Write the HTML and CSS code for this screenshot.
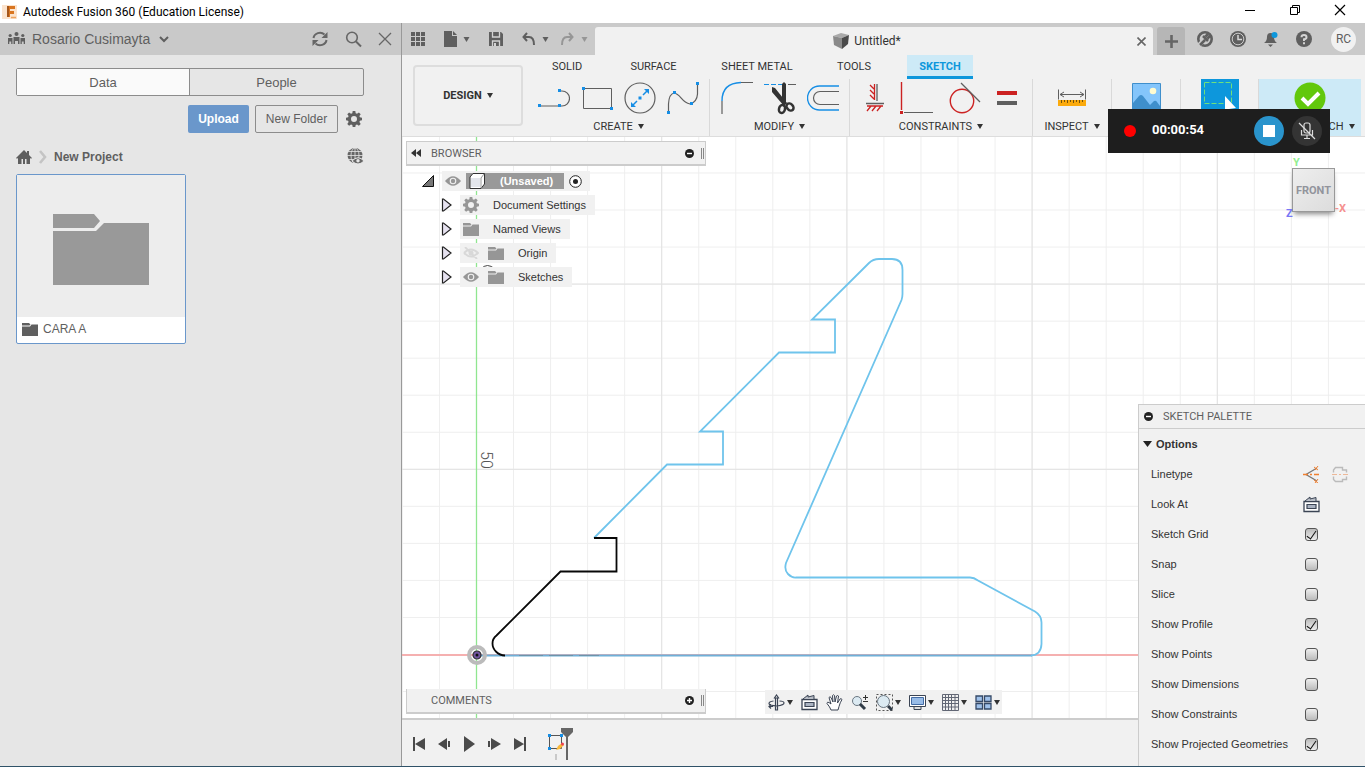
FILE: index.html
```html
<!DOCTYPE html>
<html lang="en">
<head>
<meta charset="utf-8">
<title>Autodesk Fusion 360 (Education License)</title>
<link rel="stylesheet" href="styles.css">
</head>
<body>
<svg class="defs" aria-hidden="true">
  <defs>
    <symbol id="caret" viewBox="0 0 6 5"><path d="M0 0h6L3 5z" fill="currentColor"/></symbol>
    <symbol id="folder" viewBox="0 0 16 13"><path d="M0 0h7l1.500 1.500L7.500 2.500H0zM0 3.500h8l1.500-2H16V13H0z" fill="currentColor"/></symbol>
    <symbol id="gear" viewBox="0 0 16 16"><path fill="currentColor" fill-rule="evenodd" d="M6.700 0h2.600l.4 2.200 1.300.5L12.900 1.400l1.800 1.800-1.300 1.900.5 1.200 2.100.4v2.600l-2.100.4-.5 1.300 1.300 1.900-1.800 1.800-1.900-1.300-1.300.5L9.300 16H6.700l-.4-2.100-1.300-.5-1.900 1.300-1.800-1.800L2.600 11l-.5-1.300L0 9.300V6.700l2.100-.4.5-1.200L1.300 3.200l1.800-1.800L5 2.700l1.300-.5zM8 5a3 3 0 100 6 3 3 0 000-6z"/></symbol>
    <symbol id="eye" viewBox="0 0 16 10"><path d="M0 5Q8-4.500 16 5 8 14.500 0 5z" fill="currentColor"/><circle cx="8" cy="5" r="3.300" fill="#f1f1f1"/><circle cx="8" cy="5" r="2.200" fill="currentColor"/></symbol>
    <symbol id="arrow" viewBox="0 0 11 14"><path d="M1.500 1h1L10 7l-7.500 6h-1z" fill="#e6e2f0" stroke="#222" stroke-width="1.200"/></symbol>
    <symbol id="lookat" viewBox="0 0 17 17"><path d="M1 5.500h15v10H1z" fill="#fff" stroke="#3b4454" stroke-width="1.300"/><path d="M4 8.500h9v4H4z" fill="#aab3c2" stroke="#3b4454" stroke-width="1.200"/><path d="M2 5l5-4v2l6-1.500V5" fill="#b8bdc6" stroke="#3b4454"/></symbol>
  </defs>
</svg>
<div class="app">
  <header class="titlebar">
    <svg class="logo" width="16" height="16" viewBox="0 0 16 16"><path fill="#fbe3cd" d="M0 1h15v14H0z"/><path fill="#d9751f" d="M5 2h8v3H8v2h4v3H8v3H5z"/><path fill="#a5561a" d="M5 2h2v11H5z"/><path d="M9 13.500h5" stroke="#eda25d" stroke-width="1.500"/></svg>
    <span class="title">Autodesk Fusion 360 (Education License)</span>
    <button class="win" aria-label="Minimize"><svg width="12" height="12" viewBox="0 0 12 12"><path d="M1 6.500h10" stroke="#000"/></svg></button>
    <button class="win" aria-label="Restore"><svg width="12" height="12" viewBox="0 0 12 12" fill="none" stroke="#000"><path d="M1.500 3.500h7v7h-7zM3.500 3V1.500h7v7H9"/></svg></button>
    <button class="win" aria-label="Close"><svg width="12" height="12" viewBox="0 0 12 12" stroke="#000" stroke-width="1.200"><path d="M1 1l10 10M11 1L1 11"/></svg></button>
  </header>
  <div class="body">
    <aside class="data">
      <div class="data-head">
        <svg width="17" height="14" viewBox="0 0 17 14" fill="#5f5f5f"><circle cx="8.500" cy="2" r="2"/><circle cx="2.200" cy="3.500" r="1.600"/><circle cx="14.800" cy="3.500" r="1.600"/><path d="M5.500 5h6v7h-1.500V9h-3v3H5.500zM0 6h4.500v6H3.200V9.500H1.300V12H0zM12.500 6H17v6h-1.300V9.500h-1.900V12h-1.300z"/></svg>
        <button class="team">Rosario Cusimayta <svg width="10" height="7" viewBox="0 0 10 7"><path d="M1 1l4 4 4-4" fill="none" stroke="#5f5f5f" stroke-width="2"/></svg></button>
        <button aria-label="Refresh"><svg width="18" height="16" viewBox="0 0 18 16" fill="none" stroke="#666" stroke-width="2"><path d="M2.500 7A6.500 6 0 0113.500 3.500M15.500 9A6.500 6 0 014.500 12.500"/><path d="M16.500 1v6h-6zM1.500 15V9h6z" fill="#666" stroke="none"/></svg></button>
        <button aria-label="Search"><svg width="17" height="17" viewBox="0 0 17 17" fill="none" stroke="#666" stroke-width="1.600"><circle cx="7" cy="6.500" r="5.300"/><path d="M11 10.500l5 5" stroke-width="2"/></svg></button>
        <button aria-label="Close panel"><svg width="14" height="14" viewBox="0 0 14 14" stroke="#666" stroke-width="1.300"><path d="M1 1l12 12M13 1L1 13"/></svg></button>
      </div>
      <div class="data-body">
        <div class="seg"><button class="on">Data</button><button>People</button></div>
        <div class="actions">
          <button class="upload">Upload</button><button class="newfolder">New Folder</button>
          <button class="plain" aria-label="Settings"><svg width="16" height="16"><use href="#gear"/></svg></button>
        </div>
        <nav class="crumbs">
          <svg width="16" height="14" viewBox="0 0 16 14" fill="#5f5f5f"><path d="M8 0l3 3V1h2v4l3 3-1 .8L14 8v6h-3.500V9h-1.500v5H7V9H5.500v5H2V8l-1 .8L0 8z"/></svg>
          <svg width="10" height="14" viewBox="0 0 10 14"><path d="M2 1l5 6-5 6" fill="none" stroke="#c4c4c4" stroke-width="2.600"/></svg>
          <a href="#project">New Project</a>
          <button class="plain" aria-label="Open on the web"><svg width="17" height="17" viewBox="0 0 17 17"><circle cx="8" cy="7.500" r="7.500" fill="#666"/><path d="M8 0v15M0 7.500h16M1.500 3.500h13M1.500 11.500h10" stroke="#e6e6e6" stroke-width=".8"/><ellipse cx="8" cy="7.500" rx="4" ry="7.500" fill="none" stroke="#e6e6e6" stroke-width=".8"/><path d="M5 13q6-6.500 12 0-6 6-12 0" fill="#666" stroke="#e6e6e6"/><circle cx="11" cy="12.800" r="1.700" fill="#e6e6e6"/></svg></button>
        </nav>
        <a class="card" href="#cara">
          <span class="thumb"><svg width="96" height="71" viewBox="0 0 96 71" fill="#999"><path d="M0 0h41l6 7-6 7H0zM0 17h43l8-8h45v62H0z"/></svg></span>
          <span class="cap"><svg width="16" height="13"><use href="#folder"/></svg>CARA A</span>
        </a>
      </div>
    </aside>
    <main class="work">
      <div class="docbar">
        <div class="quick">
          <button aria-label="Show data panel"><svg width="14" height="14" viewBox="0 0 14 14" fill="#5f5f5f"><path d="M0 0h4v4H0zM5 0h4v4H5zM10 0h4v4h-4zM0 5h4v4H0zM5 5h4v4H5zM10 5h4v4h-4zM0 10h4v4H0zM5 10h4v4H5zM10 10h4v4h-4z"/></svg></button>
          <button class="file" aria-label="File"><svg width="13" height="16" viewBox="0 0 13 16" fill="#5f5f5f"><path d="M0 0h8v5h5v11H0zM9 0l4 4H9z"/></svg><svg width="7" height="5"><use href="#caret"/></svg></button>
          <button class="save" aria-label="Save"><svg width="14" height="14" viewBox="0 0 14 14"><path fill="#5f5f5f" d="M0 0h12l2 2v12H0z"/><path d="M3.500 0v5h7V0M3.500 14V9h7v5" fill="none" stroke="#d4d4d4" stroke-width="1.300"/><path d="M5 11h2v3H5z" fill="#d4d4d4"/></svg></button>
          <button class="undo" aria-label="Undo"><svg width="13" height="14" viewBox="0 0 13 14" fill="none" stroke="#5f5f5f" stroke-width="2"><path d="M5 1L1.500 5 5 9M2 5h5q5 0 5 8"/></svg><svg width="7" height="5"><use href="#caret"/></svg></button>
          <button class="redo" aria-label="Redo"><svg width="13" height="14" viewBox="0 0 13 14" fill="none" stroke="#969696" stroke-width="2"><path d="M8 1l3.500 4L8 9M11 5H6q-5 0-5 8"/></svg><svg width="7" height="5"><use href="#caret"/></svg></button>
        </div>
        <div class="doctab">
          <span class="docname"><svg width="16" height="16" viewBox="0 0 16 16"><path d="M0 3l8-3 8 2-7 3z" fill="#aaa"/><path d="M0 3l9 2v11L1 12z" fill="#8a8a8a"/><path d="M16 2L9 5v11l6-5z" fill="#4a4a4a"/></svg>Untitled*</span>
          <button class="plain" aria-label="Close tab"><svg width="9" height="9" viewBox="0 0 9 9" stroke="#666" stroke-width="1.600"><path d="M.5.5l8 8M8.500.5l-8 8"/></svg></button>
        </div>
        <button class="addtab" aria-label="New tab"><svg width="13" height="13" viewBox="0 0 13 13" stroke="#666" stroke-width="2.600"><path d="M6.500 0v13M0 6.500h13"/></svg></button>
        <div class="account">
          <button aria-label="Extensions"><svg width="16" height="16" viewBox="0 0 16 16"><circle cx="8" cy="8" r="6.700" fill="none" stroke="#5f5f5f" stroke-width="2.600"/><path d="M2 14l5-5" stroke="#cacaca" stroke-width="4"/><path d="M3 14l5-5M6 5l5 5M8.500 5.500L11 3M10.500 7.500L13 5" stroke="#5f5f5f" stroke-width="2.500"/></svg></button>
          <button aria-label="Job status"><svg width="16" height="16" viewBox="0 0 16 16"><circle cx="8" cy="8" r="8" fill="#5f5f5f"/><circle cx="8" cy="8" r="5.800" fill="none" stroke="#cacaca"/><path d="M8 4v4.500h4" fill="none" stroke="#d8d8d8" stroke-width="1.500"/></svg></button>
          <button aria-label="Notifications"><svg width="16" height="16" viewBox="0 0 16 16"><path d="M1 12q3-2 3-6 0-4 3.500-4T11 6q0 4 3 6zM5 13.500h5L7.500 16z" fill="#5f5f5f"/><circle cx="11.500" cy="4" r="3" fill="#0d97dc"/></svg></button>
          <button aria-label="Help"><svg width="16" height="16" viewBox="0 0 16 16"><circle cx="8" cy="8" r="8" fill="#5f5f5f"/><path d="M5.500 6.200Q5.500 4 8 4t2.500 2.200Q10.500 8 8 8.300V10" fill="none" stroke="#d4d4d4" stroke-width="2"/><path d="M7 11.300h2v2H7z" fill="#d4d4d4"/></svg></button>
          <button class="avatar">RC</button>
        </div>
      </div>
      <div class="ribbon">
        <button class="design">DESIGN <svg width="6" height="5"><use href="#caret"/></svg></button>
        <div class="ribbon-main">
          <div class="tabs">
            <button class="t-solid">SOLID</button><button class="t-surface">SURFACE</button><button class="t-sheet">SHEET METAL</button><button class="t-tools">TOOLS</button><button class="t-sketch">SKETCH</button>
          </div>
          <div class="groups">
            <section class="group g-create">
              <div class="tools">
                <svg width="32" height="32" viewBox="0 0 32 32" fill="none" stroke="#5f5f5f" stroke-width="1.200"><path d="M2 24h20M22 9h2a7.500 7.500 0 010 15h-3"/><g fill="#168ee5" stroke="none"><path d="M0 22h3v3H0zM20 22h3v3h-3zM20 7h3v3h-3z"/></g></svg>
                <svg width="32" height="32" viewBox="0 0 32 32"><path d="M2.500 6.500h28v20h-28z" fill="none" stroke="#5f5f5f"/><path d="M1 5h3v3H1zM29 25h3v3h-3z" fill="#168ee5"/></svg>
                <svg width="32" height="32" viewBox="0 0 32 32"><circle cx="16" cy="16" r="15" fill="none" stroke="#5f5f5f" stroke-width="1.200"/><path d="M8 24l5-5M19 13l5-5" stroke="#168ee5" stroke-width="1.500"/><path d="M7 25v-5l5 5zM25 7v5l-5-5zM14.500 14.500h3v3h-3z" fill="#168ee5"/></svg>
                <svg width="32" height="32" viewBox="0 0 32 32"><path d="M1.500 29V22Q2 12 7 11C14 12 14 20 23 22q7-2 7.500-10V2" fill="none" stroke="#5f5f5f" stroke-width="1.200"/><path d="M0 29h3v3H0zM6 9h3v3H6zM23 20h3v3h-3zM29 0h3v3h-3z" fill="#168ee5"/></svg>
              </div>
              <button>CREATE <svg width="6" height="5"><use href="#caret"/></svg></button>
            </section>
            <section class="group g-modify">
              <div class="tools">
                <svg width="32" height="34" viewBox="0 0 32 34" fill="none"><path d="M1 20v13M20 1.500h12" stroke="#5f5f5f" stroke-width="1.200"/><path d="M1 20Q1 2 20 1.500" stroke="#168ee5" stroke-width="1.400"/></svg>
                <svg width="32" height="34" viewBox="0 0 32 34" fill="none"><path d="M0 3.500h18" stroke="#168ee5" stroke-dasharray="5 2"/><path d="M24 3.500h8" stroke="#5f5f5f"/><path d="M8 6l3 1 12 15-3 3L8 11zM18 3l2-2 2 2v20l-4 2z" fill="#333"/><ellipse cx="18" cy="28" rx="3" ry="4" stroke="#333" stroke-width="2.500" transform="rotate(15 18 28)"/><ellipse cx="26" cy="26" rx="3" ry="4" stroke="#333" stroke-width="2.500" transform="rotate(-45 26 26)"/></svg>
                <svg width="32" height="32" viewBox="0 0 32 32" fill="none"><path d="M32 4H12.500a12 12 0 000 24H32" stroke="#168ee5" stroke-width="1.400"/><path d="M32 9.500H13a6.500 6.500 0 000 13h19" stroke="#5f5f5f" stroke-width="1.200"/></svg>
              </div>
              <button>MODIFY <svg width="6" height="5"><use href="#caret"/></svg></button>
            </section>
            <section class="group g-constraints">
              <div class="tools">
                <svg width="18" height="30" viewBox="0 0 18 30" fill="none" stroke="#c22" stroke-width="1.300"><path d="M8.500 1v16M4 2l4 4M4 7l4 4M4 12l4 4M1 23h16M5 23l-4 5M10 23l-4 5M15 23l-4 5"/><path d="M11 1v17M0 20.500h18" stroke="#5f5f5f"/></svg>
                <svg width="33" height="34" viewBox="0 0 33 34"><path d="M1.500 1v28" stroke="#c22" stroke-width="1.400"/><path d="M4 31.500h29" stroke="#5f5f5f"/><path d="M0 30h3v3H0z" fill="#c22"/></svg>
                <svg width="32" height="34" viewBox="0 0 32 34" fill="none"><circle cx="13" cy="20" r="11.700" stroke="#c22" stroke-width="1.400"/><path d="M12 2l19 19" stroke="#5f5f5f" stroke-width="1.300"/></svg>
                <svg width="20" height="32" viewBox="0 0 20 32"><path d="M0 9h20v4H0z" fill="#c22"/><path d="M0 19h20v4H0z" fill="#5f5f5f"/></svg>
              </div>
              <button>CONSTRAINTS <svg width="6" height="5"><use href="#caret"/></svg></button>
            </section>
            <section class="group g-inspect">
              <div class="tools"><svg width="28" height="32" viewBox="0 0 28 32"><path d="M.5 7.500v10M27.500 7.500v10M2 12.500h24M6 10l-4 2.500L6 15M22 10l4 2.500-4 2.500" fill="none" stroke="#5f5f5f"/><path d="M0 18h28v6H0z" fill="#fbaa0c"/><path d="M3.500 18v3M6.500 18v2M9.500 18v3M12.500 18v2M15.500 18v3M18.500 18v2M21.500 18v3M24.500 18v2" stroke="#70500b"/></svg></div>
              <button>INSPECT <svg width="6" height="5"><use href="#caret"/></svg></button>
            </section>
            <section class="group g-insert">
              <button class="tools" aria-label="Insert"><svg width="29" height="30" viewBox="0 0 29 30"><path d="M.5.500h28v29H.5z" fill="#84c5fb" stroke="#3f8fcc"/><circle cx="21" cy="8" r="3.300" fill="#fffbd0"/><path d="M1 20l6-7q2-2 4 0l7 9 4-4q2-1 3 1l3 4v7H1z" fill="#3f8fcc"/></svg></button>
            </section>
            <section class="group g-select">
              <button class="tools" aria-label="Select"><svg width="38" height="38" viewBox="0 0 38 38"><path d="M0 0h38v38H0z" fill="#0d97dc"/><path d="M3.500 3.500h27v21h-27z" fill="none" stroke="#6ee07d" stroke-dasharray="5 2"/><path d="M24 17v17l4-4 7-1z" fill="#fff"/></svg></button>
            </section>
            <section class="group g-finish">
              <div class="tools"><svg width="32" height="32" viewBox="0 0 32 32"><circle cx="16" cy="16" r="15.500" fill="#62c80c"/><path d="M8 16l6 6L25 11" fill="none" stroke="#fff" stroke-width="4"/></svg></div>
              <button>FINISH SKETCH <svg width="6" height="5"><use href="#caret"/></svg></button>
            </section>
          </div>
        </div>
      </div>
      <div class="canvas">
        <svg class="drawing" role="img" aria-label="Sketch profile">
          <defs>
            <pattern id="minor" width="37.040" height="37.040" patternUnits="userSpaceOnUse" patternTransform="translate(-1 -1)"><path d="M0 0v37.040M0 0h37.040" fill="none" stroke="#eee" stroke-width="2"/></pattern>
            <pattern id="major" width="185.200" height="185.200" patternUnits="userSpaceOnUse" patternTransform="translate(-1 -1)"><path d="M0 0v185.200M0 0h185.200" fill="none" stroke="#e2e2e2" stroke-width="2"/></pattern>
          </defs>
          <g transform="translate(75 518)">
            <path d="M-80-600H4000V3000H-80z" fill="url(#minor)"/><path d="M-80-600H4000V3000H-80z" fill="url(#major)"/>
            <path d="M-80 0H4000" stroke="#f5b0b0" stroke-width="2"/><path d="M-.5-600V2000" stroke="#90e690" stroke-width="1.300"/>
            <path d="M4-386q6-7 14 0" fill="none" stroke="#444"/>
            <path d="M0 .5h555" stroke="#6fb0d8" stroke-width="2"/><path d="M42 .5h80" stroke="#6c94aa" stroke-width="1" stroke-dasharray="24 6"/>
            <path d="M117-117l73-73.500h56v-33h-23l79-79h56v-33h-23l57-56.500q4-4 10-4h13q10.500 0 10.500 11v24q0 3-1 6L309-92q-2 7 2 11t8 3.500h174q4 0 8 3l57 31q6.500 4 6.500 11V-11Q564 0 554 .5" fill="none" stroke="#6fc4ec" stroke-width="1.800"/>
            <path d="M28 .5c-7 0-12.500-6-12.500-12q0-5 4-8L83.500-83.500h56V-117H117" fill="none" stroke="#080808" stroke-width="1.800"/>
            <circle r="8" fill="none" stroke="#bbb" stroke-width="4"/><circle r="4" fill="#7255a0" stroke="#333" stroke-width="1.200"/><circle r="1.500" fill="#111"/>
            <text class="dimension" transform="translate(4 -204) rotate(90)">50</text>
          </g>
        </svg>
        <div class="browser">
          <div class="panelbar"><svg width="10" height="8" viewBox="0 0 10 8"><path d="M5 0v8L0 4zM10 0v8L5 4z" fill="#333"/></svg><span>BROWSER</span><button class="plain" aria-label="Collapse browser"><svg width="9" height="9" viewBox="0 0 9 9"><circle cx="4.500" cy="4.500" r="4.500" fill="#222"/><path d="M2 4.500h5" stroke="#fff" stroke-width="1.400"/></svg></button><i class="grip"></i></div>
          <ul class="tree">
            <li class="root"><svg width="12" height="12" viewBox="0 0 12 12"><path d="M11.500.5v11H.5z" fill="#777" stroke="#111"/></svg><span class="node"><svg class="gray" width="16" height="10"><use href="#eye"/></svg><span class="unsaved"><svg width="16" height="16" viewBox="0 0 16 16"><path d="M1 4l3-3.500h11.500V11L12 15.500H1z" fill="#fff" stroke="#333"/><path d="M12 15V5l3-4" fill="none" stroke="#999"/><path d="M2 5h9v9H2z" fill="#e4e6ec"/></svg><b>(Unsaved)</b></span><svg width="13" height="13" viewBox="0 0 13 13"><circle cx="6.500" cy="6.500" r="5.800" fill="#fff" stroke="#222"/><circle cx="6.500" cy="6.500" r="2.500" fill="#222"/></svg></span></li>
            <li><svg width="11" height="14"><use href="#arrow"/></svg><span class="node"><svg class="gray" width="16" height="16"><use href="#gear"/></svg><span class="label">Document Settings</span></span></li>
            <li><svg width="11" height="14"><use href="#arrow"/></svg><span class="node"><svg class="gray" width="16" height="13"><use href="#folder"/></svg><span class="label">Named Views</span></span></li>
            <li><svg width="11" height="14"><use href="#arrow"/></svg><span class="node"><svg class="faint" width="16" height="12" viewBox="0 0 16 12"><path d="M1 6q7-7 14 0-7 7-14 0M2 0l12 12" fill="none" stroke="currentColor" stroke-width="1.800"/><circle cx="8" cy="6" r="2.500" fill="currentColor"/></svg><svg class="gray second" width="16" height="13"><use href="#folder"/></svg><span class="label">Origin</span></span></li>
            <li><svg width="11" height="14"><use href="#arrow"/></svg><span class="node"><svg class="gray" width="16" height="10"><use href="#eye"/></svg><svg class="gray second" width="16" height="13"><use href="#folder"/></svg><span class="label">Sketches</span></span></li>
          </ul>
        </div>
        <div class="comments panelbar"><span>COMMENTS</span><button class="plain" aria-label="Expand comments"><svg width="9" height="9" viewBox="0 0 9 9"><circle cx="4.500" cy="4.500" r="4.500" fill="#222"/><path d="M2 4.500h5M4.500 2v5" stroke="#fff" stroke-width="1.400"/></svg></button><i class="grip"></i></div>
        <div class="navbar">
          <button aria-label="Orbit"><svg width="17" height="17" viewBox="0 0 17 17" fill="none" stroke="#3b4454" stroke-width="1.200"><path d="M7.500 16V4h2v12zM6 4.500L8.500 1 11 4.500M11.500 7q4.500 0 4.500 2t-7 3q-8-.5-8-2.500t4.500-2.500M1 12.500h4M3 10.500l-2 2 2 2"/></svg><svg width="6" height="5"><use href="#caret"/></svg></button>
          <button aria-label="Look at"><svg width="17" height="17"><use href="#lookat"/></svg></button>
          <button aria-label="Pan"><svg width="17" height="17" viewBox="0 0 17 17"><path d="M5 16Q4 13 1 9.500q0-2 2-1L5 10 3 3.500q1-1.500 2 0L7 8 6.500 1.500q1-1.500 2 0L9 8l1.500-6q1-1 2 0L11.500 9 14 5q1-1 2 .5-2 3-3 7L12 16z" fill="#fff" stroke="#3b4454"/></svg></button>
          <button aria-label="Zoom"><svg width="17" height="17" viewBox="0 0 17 17"><circle cx="6" cy="7" r="4.500" fill="#dceaf2" stroke="#6a7681"/><path d="M9 10l5 5" stroke="#303b47" stroke-width="3"/><path d="M12 3.500h5M14.500 1v5M12 7.500h5" stroke="#333"/></svg></button>
          <button aria-label="Fit"><svg width="17" height="17" viewBox="0 0 17 17"><path d="M.5.5h16v16H.5z" fill="none" stroke="#555" stroke-dasharray="2 2"/><circle cx="7.500" cy="7.500" r="6" fill="#dceaf2" stroke="#6a7681"/><path d="M12 12l4 4" stroke="#303b47" stroke-width="3"/></svg><svg width="6" height="5"><use href="#caret"/></svg></button>
          <button aria-label="Display settings"><svg width="17" height="17" viewBox="0 0 17 17"><path d="M.5 1.500h16v11H.5z" fill="#fff" stroke="#3b4454"/><path d="M2.500 3.500h12v7h-12z" fill="#98bce8" stroke="#446ca5"/><path d="M5 12.500h7v3H5z" fill="#ddd" stroke="#3b4454"/></svg><svg width="6" height="5"><use href="#caret"/></svg></button>
          <button aria-label="Grid and snaps"><svg width="17" height="17" viewBox="0 0 17 17"><path d="M.5.5h16v16H.5zM3.500 0v17M6.500 0v17M9.500 0v17M13 0v17M0 3.500h17M0 6.500h17M0 9.500h17M0 13h17" fill="none" stroke="#626775"/></svg><svg width="6" height="5"><use href="#caret"/></svg></button>
          <button aria-label="Viewports"><svg width="17" height="15" viewBox="0 0 17 15"><path d="M1 1h6.500v5.500H1zM9.500 1H16v5.500H9.500zM1 8.500h6.500V14H1zM9.500 8.500H16V14H9.500z" fill="#9fc1ea" stroke="#354967" stroke-width="1.300"/></svg><svg width="6" height="5"><use href="#caret"/></svg></button>
        </div>
        <div class="cube"><span>FRONT</span><b class="ax-y">Y</b><b class="ax-z">Z</b><b class="ax-x">-X</b></div>
      </div>
      <footer class="timeline">
        <button aria-label="Go to start"><svg width="13" height="14" viewBox="0 0 13 14" fill="#4a4a4a"><path d="M0 0h2v14H0zM12 1v12L2 7z"/></svg></button>
        <button aria-label="Step back"><svg width="13" height="14" viewBox="0 0 13 14" fill="#4a4a4a"><path d="M9 1v12L0 7zM10 4h2v6h-2z"/></svg></button>
        <button aria-label="Play"><svg width="13" height="16" viewBox="0 0 13 16" fill="#4a4a4a"><path d="M1 0v16l11-8z"/></svg></button>
        <button aria-label="Step forward"><svg width="13" height="14" viewBox="0 0 13 14" fill="#4a4a4a"><path d="M3 1v12l10-6zM0 4h2v6H0z"/></svg></button>
        <button aria-label="Go to end"><svg width="13" height="14" viewBox="0 0 13 14" fill="#4a4a4a"><path d="M11 0h2v14h-2zM1 1v12l10-6z"/></svg></button>
        <button class="marker" aria-label="Sketch feature"><svg width="27" height="32" viewBox="0 0 27 32"><path d="M2.500 7.500h12v13h-12z" fill="none" stroke="#555"/><path d="M1 6h3v3H1zM13 6h3v3h-3zM1 19h3v3H1z" fill="#168ee5"/><path d="M9 22l2-4 4-3 2 2-4 4z" fill="#f9b83a"/><circle cx="15.500" cy="16" r="1.500" fill="#ee4055"/><path d="M9 26v6" stroke="#bbb" stroke-width="1.500"/><path d="M14 0h12v4l-5 5v23h-2V9l-5-5z" fill="#666"/></svg></button>
      </footer>
      <section class="palette">
        <h2><svg width="9" height="9" viewBox="0 0 9 9"><circle cx="4.500" cy="4.500" r="4.500" fill="#222"/><path d="M2 4.500h5" stroke="#fff" stroke-width="1.400"/></svg>SKETCH PALETTE</h2>
        <h3><svg width="9" height="6" viewBox="0 0 9 6"><path d="M0 0h9L4.500 6z" fill="#222"/></svg>Options</h3>
        <div class="opt"><span>Linetype</span><button class="plain" aria-label="Construction"><svg width="17" height="17" viewBox="0 0 17 17" fill="none"><path d="M14 2L3 8.500 14 15" stroke="#777" stroke-width="1.300"/><path d="M0 8.500h17" stroke="#f08030" stroke-width="1.500" stroke-dasharray="5 2 2 2"/><path d="M11 1l4 3M15 0l-3 4M11 14l4 3M15 13l-3 4" stroke="#f08030"/></svg></button><button class="plain" aria-label="Centerline"><svg width="17" height="17" viewBox="0 0 17 17" fill="none"><path d="M1.500 6.500V4l2-2.500h7V4h4v2.500M1.500 10.500v3l2 2h7v-2h4v-3" stroke="#bbb" stroke-width="1.400"/><path d="M0 8.500h17" stroke="#edb898" stroke-dasharray="5 2 2 2"/></svg></button></div>
        <div class="opt"><span>Look At</span><button class="plain" aria-label="Look At"><svg width="17" height="17"><use href="#lookat"/></svg></button></div>
        <label class="opt"><span>Sketch Grid</span><input type="checkbox" checked></label>
        <label class="opt"><span>Snap</span><input type="checkbox"></label>
        <label class="opt"><span>Slice</span><input type="checkbox"></label>
        <label class="opt"><span>Show Profile</span><input type="checkbox" checked></label>
        <label class="opt"><span>Show Points</span><input type="checkbox"></label>
        <label class="opt"><span>Show Dimensions</span><input type="checkbox"></label>
        <label class="opt"><span>Show Constraints</span><input type="checkbox"></label>
        <label class="opt"><span>Show Projected Geometries</span><input type="checkbox" checked></label>
      </section>
    </main>
  </div>
  <div class="recorder"><i class="rec"></i><time>00:00:54</time><button class="stop" aria-label="Stop recording"><svg width="12" height="12"><path d="M0 0h12v12H0z" fill="#fff"/></svg></button><button class="mic" aria-label="Unmute"><svg width="18" height="18" viewBox="0 0 18 18" fill="none" stroke="#ddd" stroke-width="1.200"><rect x="6" y="1" width="6" height="10" rx="2"/><path d="M3.500 8v5h11V8M9 13v4M6 16.500h6M1 1l16 16"/></svg></button></div>
</div>
</body>
</html>
```
FILE: styles.css
```css
* { box-sizing: border-box; }
body { margin: 0; font-family: "Liberation Sans", Arial, sans-serif; font-size: 11px; color: #333; }
button { border: 0; padding: 0; margin: 0; background: none; font: inherit; color: inherit; display: inline-flex; align-items: center; justify-content: center; flex: none; white-space: nowrap; }
svg { display: block; flex: none; }
a { color: inherit; text-decoration: none; }
.defs { position: absolute; width: 0; height: 0; }
.app { position: relative; height: 100vh; display: flex; flex-direction: column; border-bottom: 1px solid #2f5268; overflow: hidden; }

.titlebar { flex: none; height: 23px; display: flex; align-items: center; background: #fff; color: #000; padding: 0 3px 0 2px; }
.title { flex: 1; margin-left: 5px; font: 12px Roboto, sans-serif; }
.win { width: 45px; height: 23px; padding-bottom: 3px; }
.body { flex: 1; display: flex; min-height: 0; }

.data { width: 402px; flex: none; background: #e6e6e6; border-right: 1px solid #999; color: #5f5f5f; }
.data-head { height: 32px; background: #c9c9c9; display: flex; align-items: center; gap: 16px; padding: 0 9px 0 8px; }
.team { font-size: 14px; gap: 9px; margin: 0 auto 0 -9px; }
.data-body { padding: 13px 37px 0 16px; }
.seg { display: grid; grid-template-columns: 1fr 1fr; border: 1px solid #8c8c8c; border-radius: 2px; height: 28px; font-size: 13px; }
.seg .on { background: #fafafa; border-right: 1px solid #8c8c8c; }
.actions { display: flex; justify-content: flex-end; gap: 6px; margin-top: 9px; height: 28px; font-size: 12px; }
.upload { width: 61px; background: #6a97cb; color: #fff; font-weight: bold; border-radius: 2px; }
.newfolder { width: 83px; border: 1px solid #8c8c8c; border-radius: 2px; }
.actions .plain { width: 20px; }
.crumbs { display: flex; align-items: center; height: 17px; margin-top: 15px; gap: 6px; font-size: 12px; font-weight: bold; }
.crumbs .plain { margin-left: auto; }
.card { display: block; width: 170px; margin-top: 9px; border: 1px solid #6a97cb; border-radius: 2px; background: #fff; }
.thumb { display: flex; align-items: center; justify-content: center; height: 142px; padding-top: 7px; background: #ededed; }
.cap { display: flex; align-items: center; gap: 5px; height: 26px; padding: 0 5px 2px; font-size: 12px; }

.work { position: relative; flex: 1; min-width: 0; display: flex; flex-direction: column; }
.docbar { flex: none; height: 32px; display: flex; align-items: flex-end; background: #cacaca; color: #5f5f5f; }
.quick { width: 193px; height: 32px; display: flex; align-items: center; padding-left: 9px; }
.file { margin-left: 19px; gap: 6px; }
.save { margin-left: 19px; }
.undo { margin-left: 19px; gap: 7px; }
.redo { margin-left: 12px; gap: 7px; color: #969696; }
.doctab { flex: 1; height: 28px; display: flex; align-items: center; padding-right: 7px; background: #f1f1f1; border-radius: 3px 3px 0 0; }
.docname { flex: 1; display: flex; justify-content: center; align-items: center; gap: 5px; padding-left: 2px; font: 12px Roboto, sans-serif; color: #333; }
.addtab { width: 28px; height: 28px; margin-left: 4px; background: #b6b6b6; border-radius: 3px 3px 0 0; }
.account { width: 180px; height: 32px; display: flex; align-items: center; gap: 17px; padding-left: 12px; }
.avatar { width: 25px; height: 25px; margin-left: 2px; border-radius: 50%; background: #f1f1f1; font: 12px Roboto, sans-serif; }

.ribbon { flex: none; height: 82px; display: flex; background: #f1f1f1; border-bottom: 1px solid #ddd; font: 11px Roboto, sans-serif; padding-left: 11px; overflow: hidden; }
.design { width: 110px; height: 61px; margin: 10px 0; border: 2px solid #ddd; border-radius: 4px; font-weight: bold; gap: 5px; }
.ribbon-main { flex: 1; min-width: 0; padding-left: 5px; }
.tabs { display: flex; height: 24px; }
.tabs button { padding-bottom: 1px; }
.t-solid { width: 78px; }
.t-surface { width: 95px; }
.t-sheet { width: 112px; }
.t-tools { width: 82px; }
.tabs .t-sketch { width: 66px; margin-left: 12px; background: #cdeaf7; border-bottom: 3px solid #0d97dc; padding: 2px 0 0; color: #0d97dc; font-weight: bold; }
.groups { display: flex; height: 57px; }
.group { flex: none; display: flex; flex-direction: column; align-items: center; }
.group + .group { border-left: 1px solid #d9d9d9; }
.group > button { height: 20px; gap: 5px; }
.group .tools { height: 38px; display: flex; align-items: center; gap: 11px; }
.g-create { width: 181px; }
.g-modify { width: 140px; }
.g-constraints { width: 183px; }
.g-constraints .tools { gap: 16px; }
.g-inspect { width: 79px; }
.g-insert { width: 69px; }
.g-select { width: 78px; }
.g-finish { width: 103px; background: #cdeaf7; }

.canvas { position: relative; flex: 1; min-height: 0; overflow: hidden; background: #fff; }
.drawing { width: 100%; height: 100%; }
.dimension { font: 300 16px Roboto, sans-serif; fill: #555; }
.panelbar { height: 25px; display: flex; align-items: center; padding: 0 1px 0 4px; background: #f1f1f1; border: 1px solid #ccc; border-bottom-width: 2px; font-size: 11px; color: #5f5f5f; font-family: Roboto, sans-serif; }
.panelbar span { flex: 1; padding-left: 10px; }
.grip { width: 3px; height: 11px; margin-left: 7px; border: 1px solid #888; border-width: 0 1px; }
.browser { position: absolute; left: 4px; top: 4px; width: 300px; }
.tree { list-style: none; margin: 3px 0 0 16px; padding: 0; }
.tree li { display: flex; align-items: center; height: 24px; gap: 8px; padding-left: 19px; }
.tree .root { gap: 8px; padding-left: 0; }
.node { display: flex; align-items: center; height: 20px; padding: 0 9px 0 3px; background: #f1f1f1; }
.root .node { gap: 5px; padding-right: 8px; }
.label { margin-left: 14px; }
.unsaved { display: flex; align-items: center; gap: 15px; width: 98px; height: 16px; padding-left: 3px; background: #999; color: #fff; }
.gray { color: #969696; }
.faint { color: #d8d8d8; }
.second { margin-left: 9px; }
.comments { position: absolute; left: 4px; bottom: 4px; width: 300px; border-top: 0; }
.comments span { padding-left: 20px; }
.navbar { position: absolute; left: 363px; bottom: 4px; height: 24px; display: flex; align-items: center; gap: 8px; padding: 0 2px 0 3px; background: #f1f1f1; }
.navbar button { gap: 2px; }
.cube { position: absolute; top: 31px; right: 30px; width: 43px; height: 44px; border: 1px solid #999; background: linear-gradient(135deg, #eee, #dcdcdc); box-shadow: 0 4px 5px -2px #888; display: flex; align-items: center; justify-content: center; color: #92949c; font: bold 11px Roboto, sans-serif; }
.cube b { position: absolute; font-weight: bold; }
.ax-y { left: 0; top: -13px; color: #90ee90; }
.ax-z { left: -7px; bottom: -9px; color: #7777f5; }
.ax-x { right: -12px; bottom: -4px; color: #f59090; }
.timeline { flex: none; height: 48px; display: flex; align-items: center; gap: 12px; padding: 2px 11px 0; background: #f1f1f1; border-top: 2px solid #ccc; }
.marker { margin-left: 9px; }

.palette { position: absolute; right: 0; bottom: 0; width: 227px; padding-bottom: 7px; background: #f1f1f1; border: 1px solid #ccc; border-width: 1px 0 0 1px; }
.palette h2 { display: flex; align-items: center; gap: 10px; height: 24px; margin: 0; padding-left: 5px; border-bottom: 1px solid #ccc; font: 11px Roboto, sans-serif; color: #5f5f5f; }
.palette h3 { display: flex; align-items: center; gap: 4px; height: 30px; margin: 0; padding-left: 4px; font: bold 11px "Liberation Sans", Arial, sans-serif; }
.opt { display: grid; grid-template-columns: 151px 17px 17px; column-gap: 12px; align-items: center; height: 30px; padding-left: 12px; }
.opt { grid-template-columns: 140px 17px 17px; }
.opt span { white-space: nowrap; }
.opt input { appearance: none; width: 13px; height: 13px; margin: 0; border: 1px solid #555; border-radius: 3px; background: linear-gradient(#eee, #bbb); justify-self: center; display: grid; place-items: center; }
.opt input:checked { background: linear-gradient(#bbb, #eee); }
.opt input:checked::before { content: ""; width: 4px; height: 9px; border: solid #111; border-width: 0 1px 1px 0; transform: rotate(35deg); }

.recorder { position: absolute; top: 109px; right: 35px; width: 222px; height: 44px; display: flex; align-items: center; padding: 0 8px 0 16px; background: #1e1e1e; color: #fff; font: bold 13px Roboto, sans-serif; }
.rec { width: 12px; height: 12px; border-radius: 50%; background: #f00; }
.recorder time { flex: 1; margin-left: 16px; padding-bottom: 3px; }
.stop, .mic { width: 30px; height: 30px; border-radius: 50%; }
.stop { background: #2a94cc; }
.mic { margin-left: 8px; background: #343434; }
```
